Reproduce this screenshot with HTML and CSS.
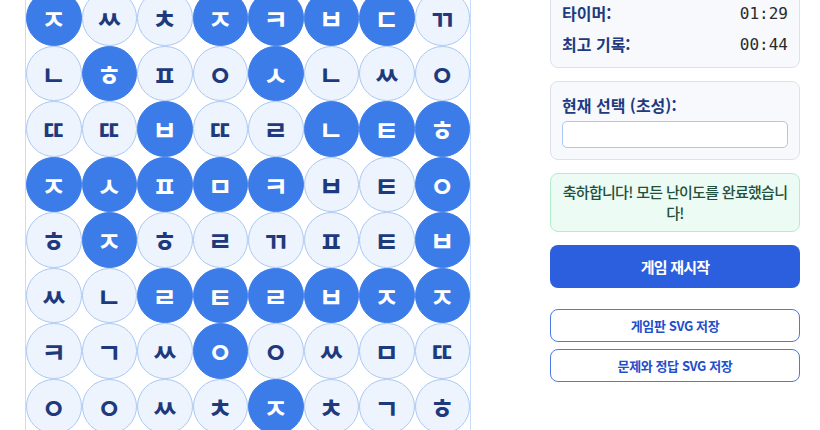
FILE: index.html
```html
<!DOCTYPE html>
<html lang="ko">
<head>
<meta charset="utf-8">
<title>초성 게임</title>
<link rel="stylesheet" href="styles.css">
</head>
<body>
<main class="layout">
  <section class="board">
    <div class="cell on">ㅈ</div><div class="cell">ㅆ</div><div class="cell">ㅊ</div><div class="cell on">ㅈ</div><div class="cell on">ㅋ</div><div class="cell on">ㅂ</div><div class="cell on">ㄷ</div><div class="cell">ㄲ</div>
    <div class="cell">ㄴ</div><div class="cell on">ㅎ</div><div class="cell">ㅍ</div><div class="cell">ㅇ</div><div class="cell on">ㅅ</div><div class="cell">ㄴ</div><div class="cell">ㅆ</div><div class="cell">ㅇ</div>
    <div class="cell">ㄸ</div><div class="cell">ㄸ</div><div class="cell on">ㅂ</div><div class="cell">ㄸ</div><div class="cell">ㄹ</div><div class="cell on">ㄴ</div><div class="cell on">ㅌ</div><div class="cell on">ㅎ</div>
    <div class="cell on">ㅈ</div><div class="cell on">ㅅ</div><div class="cell on">ㅍ</div><div class="cell on">ㅁ</div><div class="cell on">ㅋ</div><div class="cell">ㅂ</div><div class="cell">ㅌ</div><div class="cell on">ㅇ</div>
    <div class="cell">ㅎ</div><div class="cell on">ㅈ</div><div class="cell">ㅎ</div><div class="cell">ㄹ</div><div class="cell">ㄲ</div><div class="cell">ㅍ</div><div class="cell">ㅌ</div><div class="cell on">ㅂ</div>
    <div class="cell">ㅆ</div><div class="cell">ㄴ</div><div class="cell on">ㄹ</div><div class="cell on">ㅌ</div><div class="cell on">ㄹ</div><div class="cell on">ㅂ</div><div class="cell on">ㅈ</div><div class="cell on">ㅈ</div>
    <div class="cell">ㅋ</div><div class="cell">ㄱ</div><div class="cell">ㅆ</div><div class="cell on">ㅇ</div><div class="cell">ㅇ</div><div class="cell">ㅆ</div><div class="cell">ㅁ</div><div class="cell">ㄸ</div>
    <div class="cell">ㅇ</div><div class="cell">ㅇ</div><div class="cell">ㅆ</div><div class="cell">ㅊ</div><div class="cell on">ㅈ</div><div class="cell">ㅊ</div><div class="cell">ㄱ</div><div class="cell">ㅎ</div>
  </section>
  <aside class="panel">
    <div class="card stats">
      <div class="stat"><span class="label">타이머:</span><span class="value">01:29</span></div>
      <div class="stat"><span class="label">최고 기록:</span><span class="value">00:44</span></div>
    </div>
    <div class="card current">
      <div class="label">현재 선택 (초성):</div>
      <div class="input"></div>
    </div>
    <div class="success">축하합니다! 모든 난이도를 완료했습니다!</div>
    <button class="btn primary">게임 재시작</button>
    <div class="save-group">
      <button class="btn outline">게임판 SVG 저장</button>
      <button class="btn outline">문제와 정답 SVG 저장</button>
    </div>
  </aside>
</main>
</body>
</html>
```
FILE: styles.css
```css
html, body {
  margin: 0;
  padding: 0;
  background: #ffffff;
  overflow: hidden;
}
body {
  font-family: "Noto Sans CJK KR", "Noto Sans", sans-serif;
  color: #1f2937;
}
.layout {
  display: flex;
  align-items: flex-start;
  gap: 79px;
  padding-left: 25px;
  margin-top: -11px;
}
.board {
  display: grid;
  grid-template-columns: repeat(8, 55.5px);
  grid-auto-rows: 55.5px;
  border: 1px solid #c7dcf8;
  width: 444px;
}
.cell {
  box-sizing: border-box;
  border-radius: 50%;
  border: 1px solid #a9c8f3;
  background: #edf4fe;
  color: #1e3a7c;
  display: flex;
  align-items: center;
  justify-content: center;
  padding-top: 2px;
  font-size: 27px;
  font-weight: 700;
  line-height: 1;
}
.cell.on {
  background: #3c7ce9;
  border-color: #3c7ce9;
  color: #ffffff;
}
.panel {
  width: 250px;
  display: flex;
  flex-direction: column;
}
.card {
  box-sizing: border-box;
  background: #f7f9fc;
  border: 1px solid #dde2ea;
  border-radius: 8px;
  padding: 11px 11px;
}
.stats {
  display: flex;
  flex-direction: column;
  gap: 7px;
}
.stat {
  display: flex;
  justify-content: space-between;
  align-items: center;
  height: 24px;
}
.label {
  color: #1e3a80;
  font-weight: 700;
  font-size: 16px;
  line-height: 24px;
}
.value {
  font-family: "DejaVu Sans Mono", "Liberation Mono", monospace;
  font-size: 16px;
  color: #2b2b2b;
}
.current {
  margin-top: 13px;
}
.input {
  margin-top: 4px;
  height: 27px;
  box-sizing: border-box;
  background: #ffffff;
  border: 1px solid #a9c8f3;
  border-radius: 5px;
}
.success {
  margin-top: 13px;
  box-sizing: border-box;
  background: #ecfbf3;
  border: 1px solid #b5ecd0;
  border-radius: 8px;
  padding: 8px 9px;
  text-align: center;
  color: #23503c;
  font-size: 15px;
  letter-spacing: -0.7px;
  line-height: 20.5px;
  font-weight: 500;
}
.btn {
  font-family: inherit;
  font-weight: 700;
  border-radius: 8px;
  cursor: pointer;
  box-sizing: border-box;
  width: 100%;
}
.primary {
  margin-top: 13px;
  height: 43px;
  background: #2c5fdd;
  border: none;
  color: #ffffff;
  font-size: 15px;
  letter-spacing: -0.8px;
}
.save-group {
  margin-top: 21px;
  display: flex;
  flex-direction: column;
  gap: 7px;
}
.outline {
  height: 33px;
  background: #ffffff;
  border: 1.5px solid #4b7be2;
  color: #1f4fcc;
  font-size: 13px;
  letter-spacing: -0.4px;
}
```
